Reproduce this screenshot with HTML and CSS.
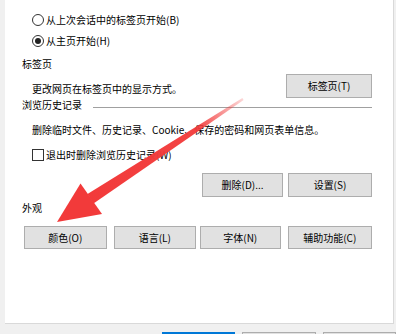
FILE: index.html
```html
<!DOCTYPE html>
<html lang="zh-CN">
<head>
<meta charset="utf-8">
<link rel="stylesheet" href="styles.css">
</head>
<body>
<div class="panel">
  <div class="opt"><span class="radio"></span><span class="opt-text">从上次会话中的标签页开始(B)</span></div>
  <div class="opt"><span class="radio on"></span><span class="opt-text">从主页开始(H)</span></div>
  <div class="group-label">标签页</div>
  <div class="tab-row">
    <div class="desc">更改网页在标签页中的显示方式。</div>
    <button class="btn btn-tab">标签页(T)</button>
  </div>
  <div class="group-head"><span class="head-text">浏览历史记录</span><span class="rule"></span></div>
  <div class="desc desc2">删除临时文件、历史记录、Cookie、保存的密码和网页表单信息。</div>
  <div class="check-row"><span class="check"></span><span class="opt-text">退出时删除浏览历史记录(W)</span></div>
  <div class="btn-row right">
    <button class="btn btn-del">删除(D)...</button>
    <button class="btn btn-set">设置(S)</button>
  </div>
  <div class="group-label look">外观</div>
  <div class="btn-row four">
    <button class="btn b1">颜色(O)</button>
    <button class="btn b2">语言(L)</button>
    <button class="btn b3">字体(N)</button>
    <button class="btn b4">辅助功能(C)</button>
  </div>
</div>
<div class="footer">
  <button class="btn fbtn primary" aria-label="确定"></button>
  <button class="btn fbtn" aria-label="取消"></button>
  <button class="btn fbtn" aria-label="应用"></button>
</div>
<svg class="arrow" width="396" height="334" viewBox="0 0 396 334">
  <defs>
    <linearGradient id="g" x1="243" y1="99" x2="91" y2="199" gradientUnits="userSpaceOnUse">
      <stop offset="0" stop-color="#f23a3a" stop-opacity="0.2"/>
      <stop offset="0.3" stop-color="#f23a3a" stop-opacity="0.95"/>
      <stop offset="1" stop-color="#f23a3a"/>
    </linearGradient>
  </defs>
  <polygon points="243.6,99.9 242.4,98.1 87.5,194 93.5,203.4" fill="url(#g)"/>
  <polygon points="57,222 80.5,183.5 102,214" fill="#f23a3a"/>
</svg>
</body>
</html>
```
FILE: styles.css
```css
* { box-sizing: border-box; }
html, body { margin: 0; padding: 0; }
body {
  background: #f0f0f0;
  width: 396px;
  height: 334px;
  overflow: hidden;
  position: relative;
  font-family: "Noto Sans CJK SC", "Noto Sans", sans-serif;
  font-size: 10px;
  color: #000;
}
.panel {
  margin-left: 5px;
  width: 389px;
  height: 324px;
  background: #fff;
  border-right: 1px solid #d9d9d9;
  border-bottom: 1px solid #d9d9d9;
  padding: 9px 21px 0 17px;
  display: flex;
  flex-direction: column;
}
.opt {
  height: 21px;
  display: flex;
  align-items: center;
  padding-left: 10px;
}
.radio {
  width: 12px;
  height: 12px;
  border: 1px solid #333;
  border-radius: 50%;
  display: flex;
  align-items: center;
  justify-content: center;
  flex: none;
}
.radio.on::after {
  content: "";
  width: 6px;
  height: 6px;
  border-radius: 50%;
  background: #222;
}
.opt-text { margin-left: 2px; line-height: 14px; }
.group-label {
  margin-top: 3px;
  height: 20px;
  line-height: 20px;
}
.tab-row {
  height: 24px;
  display: flex;
  justify-content: space-between;
  align-items: flex-start;
}
.desc {
  margin-top: 8px;
  margin-left: 10px;
  line-height: 14px;
}
.btn {
  font-family: "Noto Sans CJK SC", "Noto Sans", sans-serif;
  font-size: 10px;
  color: #000;
  background: #e1e1e1;
  border: 1px solid #adadad;
  padding: 0;
  margin: 0;
  line-height: 14px;
}
.btn-tab { width: 86px; height: 24px; }
.group-head {
  height: 14px;
  display: flex;
  align-items: flex-start;
}
.head-text { line-height: 14px; }
.rule {
  flex: 1;
  height: 1px;
  background: #a0a0a0;
  margin-top: 9px;
  margin-left: 11px;
}
.desc2 { margin-top: 11px; }
.check-row {
  margin-top: 10px;
  height: 16px;
  display: flex;
  align-items: center;
  padding-left: 10px;
}
.check {
  width: 12px;
  height: 12px;
  border: 1px solid #333;
  flex: none;
}
.btn-row { display: flex; }
.btn-row.right {
  margin-top: 10px;
  justify-content: flex-end;
  gap: 5px;
}
.btn-del { width: 81px; height: 24px; }
.btn-set { width: 84px; height: 24px; }
.look { margin-top: 4px; height: 14px; line-height: 14px; }
.btn-row.four {
  margin-top: 11px;
  padding-left: 2px;
  gap: 7px;
}
.four .btn { height: 23px; width: 83px; }
.four .b3 { width: 81px; margin-left: -3px; }
.four .b4 { width: 85px; }
.footer {
  display: flex;
  padding-left: 162px;
  margin-top: 8px;
  gap: 7px;
}
.fbtn { width: 74px; height: 23px; }
.fbtn.primary { border: 2px solid #0078d7; }
.arrow {
  position: absolute;
  left: 0;
  top: 0;
  pointer-events: none;
}
```
